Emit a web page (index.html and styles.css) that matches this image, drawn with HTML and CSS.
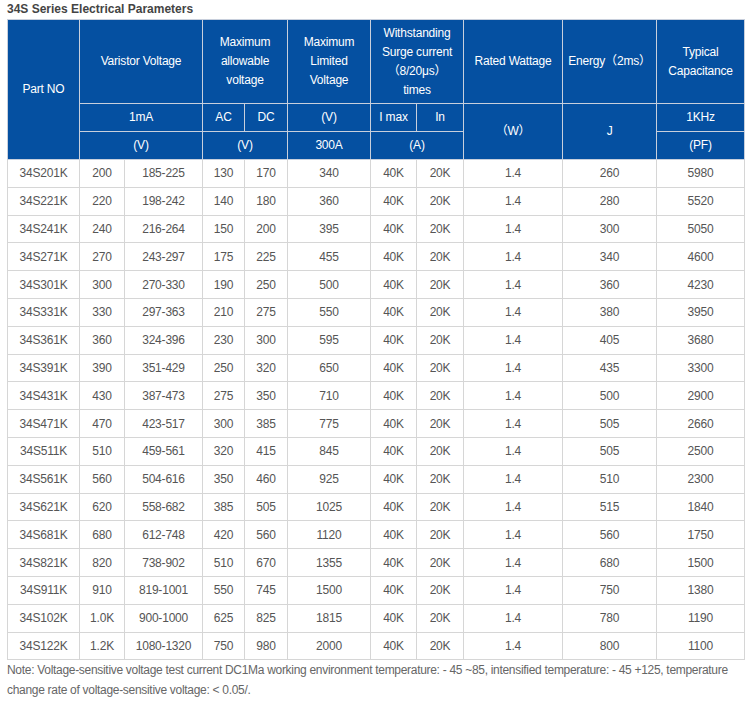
FILE: index.html
```html
<!DOCTYPE html>
<html>
<head>
<meta charset="utf-8">
<link rel="stylesheet" href="styles.css">
</head>
<body>
<div class="page">
  <div class="title">34S Series Electrical Parameters</div>
  <table class="params">
    <colgroup>
      <col style="width:72px"><col style="width:45px"><col style="width:78px">
      <col style="width:42px"><col style="width:43px"><col style="width:83px">
      <col style="width:46px"><col style="width:47px"><col style="width:99px">
      <col style="width:94px"><col style="width:88px">
    </colgroup>
    <thead>
      <tr class="h1">
        <th rowspan="3">Part NO</th>
        <th colspan="2">Varistor Voltage</th>
        <th colspan="2">Maximum<br>allowable<br>voltage</th>
        <th>Maximum<br>Limited<br>Voltage</th>
        <th colspan="2">Withstanding<br>Surge current<br>（8/20μs）<br>times</th>
        <th>Rated Wattage</th>
        <th>Energy（2ms）</th>
        <th>Typical<br>Capacitance</th>
      </tr>
      <tr class="h2">
        <th colspan="2">1mA</th>
        <th>AC</th>
        <th>DC</th>
        <th>(V)</th>
        <th>I max</th>
        <th>In</th>
        <th rowspan="2">（W）</th>
        <th rowspan="2">J</th>
        <th>1KHz</th>
      </tr>
      <tr class="h3">
        <th colspan="2">(V)</th>
        <th colspan="2">(V)</th>
        <th>300A</th>
        <th colspan="2">(A)</th>
        <th>(PF)</th>
      </tr>
    </thead>
    <tbody>
      <tr><td>34S201K</td><td>200</td><td>185-225</td><td>130</td><td>170</td><td>340</td><td>40K</td><td>20K</td><td>1.4</td><td>260</td><td>5980</td></tr>
      <tr><td>34S221K</td><td>220</td><td>198-242</td><td>140</td><td>180</td><td>360</td><td>40K</td><td>20K</td><td>1.4</td><td>280</td><td>5520</td></tr>
      <tr><td>34S241K</td><td>240</td><td>216-264</td><td>150</td><td>200</td><td>395</td><td>40K</td><td>20K</td><td>1.4</td><td>300</td><td>5050</td></tr>
      <tr><td>34S271K</td><td>270</td><td>243-297</td><td>175</td><td>225</td><td>455</td><td>40K</td><td>20K</td><td>1.4</td><td>340</td><td>4600</td></tr>
      <tr><td>34S301K</td><td>300</td><td>270-330</td><td>190</td><td>250</td><td>500</td><td>40K</td><td>20K</td><td>1.4</td><td>360</td><td>4230</td></tr>
      <tr><td>34S331K</td><td>330</td><td>297-363</td><td>210</td><td>275</td><td>550</td><td>40K</td><td>20K</td><td>1.4</td><td>380</td><td>3950</td></tr>
      <tr><td>34S361K</td><td>360</td><td>324-396</td><td>230</td><td>300</td><td>595</td><td>40K</td><td>20K</td><td>1.4</td><td>405</td><td>3680</td></tr>
      <tr><td>34S391K</td><td>390</td><td>351-429</td><td>250</td><td>320</td><td>650</td><td>40K</td><td>20K</td><td>1.4</td><td>435</td><td>3300</td></tr>
      <tr><td>34S431K</td><td>430</td><td>387-473</td><td>275</td><td>350</td><td>710</td><td>40K</td><td>20K</td><td>1.4</td><td>500</td><td>2900</td></tr>
      <tr><td>34S471K</td><td>470</td><td>423-517</td><td>300</td><td>385</td><td>775</td><td>40K</td><td>20K</td><td>1.4</td><td>505</td><td>2660</td></tr>
      <tr><td>34S511K</td><td>510</td><td>459-561</td><td>320</td><td>415</td><td>845</td><td>40K</td><td>20K</td><td>1.4</td><td>505</td><td>2500</td></tr>
      <tr><td>34S561K</td><td>560</td><td>504-616</td><td>350</td><td>460</td><td>925</td><td>40K</td><td>20K</td><td>1.4</td><td>510</td><td>2300</td></tr>
      <tr><td>34S621K</td><td>620</td><td>558-682</td><td>385</td><td>505</td><td>1025</td><td>40K</td><td>20K</td><td>1.4</td><td>515</td><td>1840</td></tr>
      <tr><td>34S681K</td><td>680</td><td>612-748</td><td>420</td><td>560</td><td>1120</td><td>40K</td><td>20K</td><td>1.4</td><td>560</td><td>1750</td></tr>
      <tr><td>34S821K</td><td>820</td><td>738-902</td><td>510</td><td>670</td><td>1355</td><td>40K</td><td>20K</td><td>1.4</td><td>680</td><td>1500</td></tr>
      <tr><td>34S911K</td><td>910</td><td>819-1001</td><td>550</td><td>745</td><td>1500</td><td>40K</td><td>20K</td><td>1.4</td><td>750</td><td>1380</td></tr>
      <tr><td>34S102K</td><td>1.0K</td><td>900-1000</td><td>625</td><td>825</td><td>1815</td><td>40K</td><td>20K</td><td>1.4</td><td>780</td><td>1190</td></tr>
      <tr><td>34S122K</td><td>1.2K</td><td>1080-1320</td><td>750</td><td>980</td><td>2000</td><td>40K</td><td>20K</td><td>1.4</td><td>800</td><td>1100</td></tr>
    </tbody>
  </table>
  <p class="note">Note: Voltage-sensitive voltage test current DC1Ma working environment temperature: - 45 ~85, intensified temperature: - 45 +125, temperature change rate of voltage-sensitive voltage: &lt; 0.05/.</p>
</div>
</body>
</html>
```

FILE: styles.css
```css
html, body {
  margin: 0;
  padding: 0;
  background: #ffffff;
}

body {
  font-family: "Liberation Sans", Arial, "Noto Sans CJK SC", sans-serif;
  font-size: 12px;
  color: #555555;
  letter-spacing: -0.2px;
}

.page {
  padding: 0 0 0 7px;
}

.title {
  height: 19px;
  line-height: 18px;
  font-weight: bold;
  color: #444444;
  font-size: 12px;
  letter-spacing: 0;
}

.params {
  width: 737px;
  table-layout: fixed;
  border-collapse: collapse;
  border: 1px solid #d6d6d6;
}

.params th {
  background: #0550a1;
  color: #ffffff;
  font-weight: normal;
  text-align: center;
  vertical-align: middle;
  border: 1px solid #c8cfdc;
  line-height: 19px;
  padding: 0;
  text-spacing-trim: space-all;
  font-feature-settings: "chws" 0, "halt" 0, "palt" 0;
}

.params .h1 th {
  height: 83px;
}

.params .h2 th,
.params .h3 th {
  height: 27px;
}

.params td {
  text-align: center;
  vertical-align: middle;
  border: 1px solid #d6d6d6;
  height: 26.8px;
  padding: 0;
  color: #555555;
}

.note {
  margin: 0;
  line-height: 20px;
  color: #666666;
  font-size: 12px;
  letter-spacing: -0.3px;
  padding-right: 6px;
}
```
